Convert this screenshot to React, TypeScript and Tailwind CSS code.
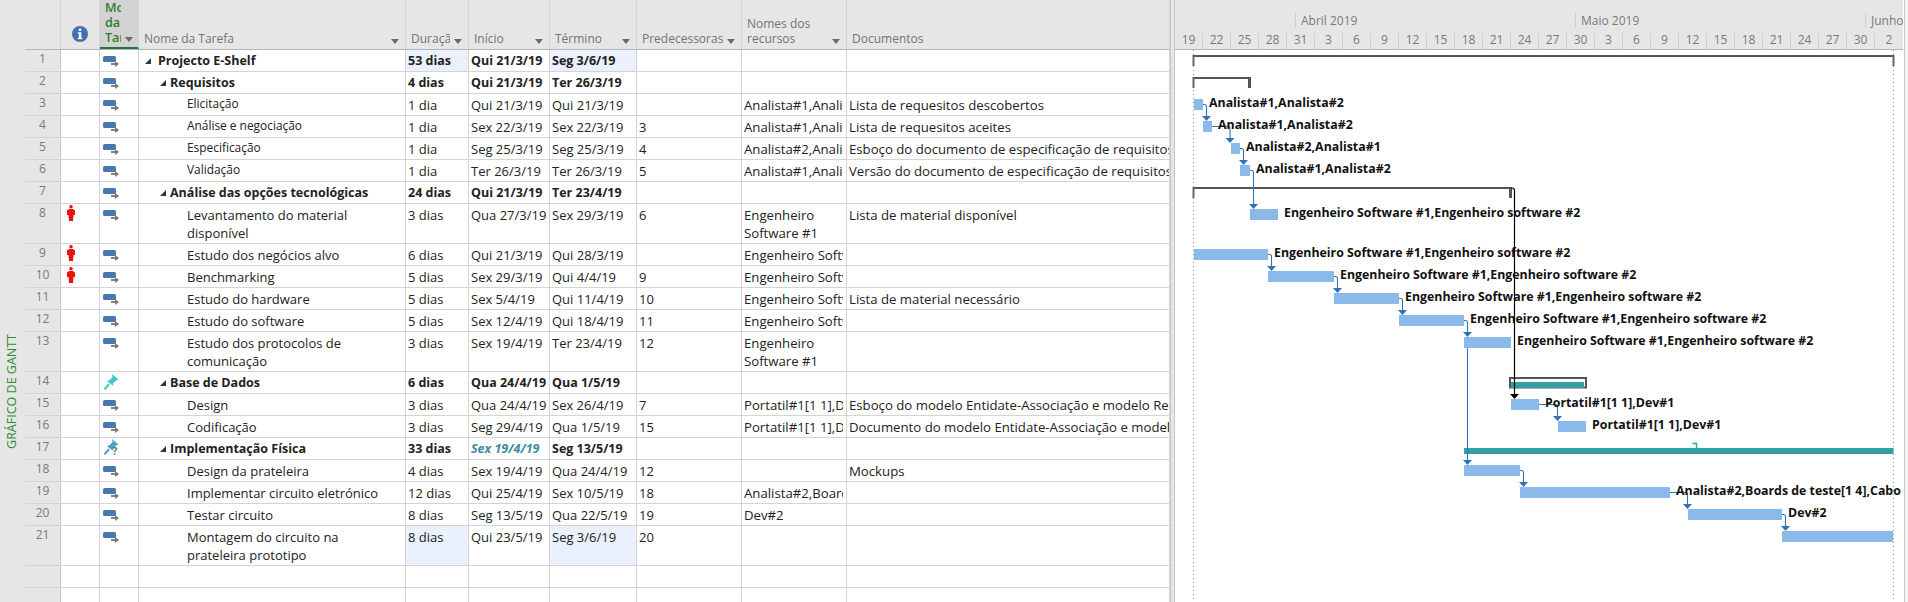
import type { ReactNode } from 'react'

type Row = {
  n?: number
  h?: number
  level?: 0 | 1 | 2
  name?: string
  lines?: string[]
  dur?: string
  start?: string
  end?: string
  pred?: string
  res?: string | string[]
  doc?: string
  small?: boolean
  person?: boolean
  mode?: 'auto' | 'pin' | 'pinq'
  hl?: boolean
}

const rows: Row[] = [
  { n: 1, level: 0, name: 'Projecto E-Shelf', dur: '53 dias', start: 'Qui 21/3/19', end: 'Seg 3/6/19', hl: true },
  { n: 2, level: 1, name: 'Requisitos', dur: '4 dias', start: 'Qui 21/3/19', end: 'Ter 26/3/19' },
  { n: 3, level: 2, small: true, name: 'Elicitação', dur: '1 dia', start: 'Qui 21/3/19', end: 'Qui 21/3/19', res: 'Analista#1,Analista#2', doc: 'Lista de requesitos descobertos' },
  { n: 4, level: 2, small: true, name: 'Análise e negociação', dur: '1 dia', start: 'Sex 22/3/19', end: 'Sex 22/3/19', pred: '3', res: 'Analista#1,Analista#2', doc: 'Lista de requesitos aceites' },
  { n: 5, level: 2, small: true, name: 'Especificação', dur: '1 dia', start: 'Seg 25/3/19', end: 'Seg 25/3/19', pred: '4', res: 'Analista#2,Analista#1', doc: 'Esboço do documento de especificação de requisitos' },
  { n: 6, level: 2, small: true, name: 'Validação', dur: '1 dia', start: 'Ter 26/3/19', end: 'Ter 26/3/19', pred: '5', res: 'Analista#1,Analista#2', doc: 'Versão do documento de especificação de requisitos' },
  { n: 7, level: 1, name: 'Análise das opções tecnológicas', dur: '24 dias', start: 'Qui 21/3/19', end: 'Ter 23/4/19' },
  { n: 8, h: 40, level: 2, person: true, lines: ['Levantamento do material', 'disponível'], dur: '3 dias', start: 'Qua 27/3/19', end: 'Sex 29/3/19', pred: '6', res: ['Engenheiro', 'Software #1'], doc: 'Lista de material disponível' },
  { n: 9, level: 2, person: true, name: 'Estudo dos negócios alvo', dur: '6 dias', start: 'Qui 21/3/19', end: 'Qui 28/3/19', res: 'Engenheiro Software #1' },
  { n: 10, level: 2, person: true, name: 'Benchmarking', dur: '5 dias', start: 'Sex 29/3/19', end: 'Qui 4/4/19', pred: '9', res: 'Engenheiro Software #1' },
  { n: 11, level: 2, name: 'Estudo do hardware', dur: '5 dias', start: 'Sex 5/4/19', end: 'Qui 11/4/19', pred: '10', res: 'Engenheiro Software #1', doc: 'Lista de material necessário' },
  { n: 12, level: 2, name: 'Estudo do software', dur: '5 dias', start: 'Sex 12/4/19', end: 'Qui 18/4/19', pred: '11', res: 'Engenheiro Software #1' },
  { n: 13, h: 40, level: 2, lines: ['Estudo dos protocolos de', 'comunicação'], dur: '3 dias', start: 'Sex 19/4/19', end: 'Ter 23/4/19', pred: '12', res: ['Engenheiro', 'Software #1'] },
  { n: 14, level: 1, mode: 'pin', name: 'Base de Dados', dur: '6 dias', start: 'Qua 24/4/19', end: 'Qua 1/5/19' },
  { n: 15, level: 2, name: 'Design', dur: '3 dias', start: 'Qua 24/4/19', end: 'Sex 26/4/19', pred: '7', res: 'Portatil#1[1 1],Dev#1', doc: 'Esboço do modelo Entidate-Associação e modelo Relacional' },
  { n: 16, level: 2, name: 'Codificação', dur: '3 dias', start: 'Seg 29/4/19', end: 'Qua 1/5/19', pred: '15', res: 'Portatil#1[1 1],Dev#1', doc: 'Documento do modelo Entidate-Associação e modelo Relacional' },
  { n: 17, level: 1, mode: 'pinq', name: 'Implementação Física', dur: '33 dias', start: 'Sex 19/4/19', end: 'Seg 13/5/19' },
  { n: 18, level: 2, name: 'Design da prateleira', dur: '4 dias', start: 'Sex 19/4/19', end: 'Qua 24/4/19', pred: '12', doc: 'Mockups' },
  { n: 19, level: 2, name: 'Implementar circuito eletrónico', dur: '12 dias', start: 'Qui 25/4/19', end: 'Sex 10/5/19', pred: '18', res: 'Analista#2,Boards de teste[1 4],Cabo' },
  { n: 20, level: 2, name: 'Testar circuito', dur: '8 dias', start: 'Seg 13/5/19', end: 'Qua 22/5/19', pred: '19', res: 'Dev#2' },
  { n: 21, h: 40, level: 2, lines: ['Montagem do circuito na', 'prateleira prototipo'], dur: '8 dias', start: 'Qui 23/5/19', end: 'Seg 3/6/19', pred: '20', hl: true },
  {},
  {},
]

const ORIGIN = 1175
const BODY_TOP = 50

const bars: Array<{ x: number; x2: number; y: number; label?: string; lx?: number; ly?: number }> = [
  { x: 1194, x2: 1203, y: 99, label: 'Analista#1,Analista#2', lx: 1209, ly: 103 },
  { x: 1203, x2: 1212, y: 121, label: 'Analista#1,Analista#2', lx: 1218, ly: 125 },
  { x: 1231, x2: 1240, y: 143, label: 'Analista#2,Analista#1', lx: 1246, ly: 147 },
  { x: 1240, x2: 1250, y: 165, label: 'Analista#1,Analista#2', lx: 1256, ly: 169 },
  { x: 1250, x2: 1278, y: 209, label: 'Engenheiro Software #1,Engenheiro software #2', lx: 1284, ly: 213 },
  { x: 1194, x2: 1268, y: 249, label: 'Engenheiro Software #1,Engenheiro software #2', lx: 1274, ly: 253 },
  { x: 1268, x2: 1334, y: 271, label: 'Engenheiro Software #1,Engenheiro software #2', lx: 1340, ly: 275 },
  { x: 1334, x2: 1399, y: 293, label: 'Engenheiro Software #1,Engenheiro software #2', lx: 1405, ly: 297 },
  { x: 1399, x2: 1464, y: 315, label: 'Engenheiro Software #1,Engenheiro software #2', lx: 1470, ly: 319 },
  { x: 1464, x2: 1511, y: 337, label: 'Engenheiro Software #1,Engenheiro software #2', lx: 1517, ly: 341 },
  { x: 1511, x2: 1539, y: 399, label: 'Portatil#1[1 1],Dev#1', lx: 1545, ly: 403 },
  { x: 1558, x2: 1586, y: 421, label: 'Portatil#1[1 1],Dev#1', lx: 1592, ly: 425 },
  { x: 1464, x2: 1520, y: 465 },
  { x: 1520, x2: 1670, y: 487, label: 'Analista#2,Boards de teste[1 4],Cabo', lx: 1676, ly: 491 },
  { x: 1688, x2: 1782, y: 509, label: 'Dev#2', lx: 1788, ly: 513 },
  { x: 1782, x2: 1893, y: 531 },
]

const links = [
  { x: 1203, y: 104.5, to: 1206.5, end: 116 },
  { x: 1212, y: 126.5, to: 1230, end: 138 },
  { x: 1240, y: 148.5, to: 1243.5, end: 160 },
  { x: 1250, y: 170.5, to: 1253.5, end: 204 },
  { x: 1268, y: 254.5, to: 1271.5, end: 266 },
  { x: 1334, y: 276.5, to: 1337.5, end: 288 },
  { x: 1399, y: 298.5, to: 1402.5, end: 310 },
  { x: 1464, y: 320.5, to: 1467.5, end: 332 },
  { x: 1467.5, y: 337, to: 1467.5, end: 460 },
  { x: 1539, y: 404.5, to: 1557.5, end: 416 },
  { x: 1520, y: 470.5, to: 1523.5, end: 482 },
  { x: 1670, y: 492.5, to: 1687.5, end: 504 },
  { x: 1782, y: 514.5, to: 1785.5, end: 526 },
]

const days = ['19', '22', '25', '28', '31', '3', '6', '9', '12', '15', '18', '21', '24', '27', '30', '3', '6', '9', '12', '15', '18', '21', '24', '27', '30', '2']

function TaskIcon() {
  return (
    <svg width="16" height="11" viewBox="0 0 16 11">
      <rect x="0" y="0" width="13" height="6" rx="1.5" fill="#4a78ae" />
      <path d="M8 8h5" stroke="#777" strokeWidth="1.8" />
      <path d="M12 5 16 8l-4 3z" fill="#777" />
    </svg>
  )
}

function PinIcon({ question }: { question?: boolean }) {
  const color = question ? '#45a7c6' : '#45c8c4'
  return (
    <svg width="16" height="16" viewBox="0 0 16 16">
      <path d="M9 0l6.500 5.500-2 .7-3.500 3.300.3 2.500-6.500-5 2.600-.8L9.500 3z" fill={color} />
      <path d="M6 10 1.500 15.500" stroke={color} strokeWidth="2" />
      {question && <text x="9.500" y="15.800" fontSize="10" fontWeight="700" fill="#5a6f7d" fontFamily="'Open Sans', sans-serif">?</text>}
    </svg>
  )
}

function PersonIcon() {
  return (
    <svg width="8" height="16" viewBox="0 0 8 16" fill="#ee1111">
      <circle cx="4" cy="1.8" r="1.8" />
      <path d="M2 4h4l2 1.500V10H6.500L6 16H2l-.5-6H0V5.500z" />
    </svg>
  )
}

function Collapse() {
  return (
    <svg width="6" height="6" viewBox="0 0 6 6" className="shrink-0">
      <path d="M6 0v6H0z" fill="#333" />
    </svg>
  )
}

function Caret() {
  return (
    <svg width="8" height="5" viewBox="0 0 8 5" className="shrink-0">
      <path d="M0 0h8L4 5z" fill="#6a6a6a" />
    </svg>
  )
}

function HeaderCell({ className, children, caret = true }: { className: string; children: ReactNode; caret?: boolean }) {
  return (
    <div className={`flex h-full shrink-0 items-end border-r border-[#d4d4d4] pb-[3px] ${className}`}>
      <div className="min-w-0 flex-1 overflow-hidden whitespace-nowrap leading-[15px]">{children}</div>
      {caret && <div className="mb-[2px] ml-1 mr-[6px]"><Caret /></div>}
    </div>
  )
}

function Header() {
  return (
    <div className="flex h-[50px] border-b border-[#b4b4b4] bg-[#e6e6e6] text-[12px] text-[#70757a]">
      <div className="h-full w-[36px] shrink-0 border-r border-[#d4d4d4]" />
      <div className="flex h-full w-[39px] shrink-0 items-end justify-center border-r border-[#d4d4d4] pb-[7px]">
        <svg width="16" height="16" viewBox="0 0 16 16">
          <circle cx="8" cy="8" r="8" fill="#3f72ae" />
          <rect x="6.700" y="2.600" width="2.600" height="2.400" fill="#fff" />
          <path d="M5.800 6.200h3.500v5.600h1v1.400H5.800v-1.400h1V7.600h-1z" fill="#fff" />
        </svg>
      </div>
      <div className="flex h-full w-[39px] shrink-0 border-b-2 border-r border-[#d4d4d4] border-b-[#217346] bg-[#d2d2d2] pl-[5px] text-[12.5px] font-semibold leading-[15px] text-[#2f7d32]">
        <div className="w-[16px] overflow-hidden whitespace-nowrap">
          <div className="h-[15px]">Modo</div>
          <div className="h-[15px]">da</div>
          <div className="h-[15px]">Tarefa</div>
        </div>
        <div className="ml-[4px] mt-[37px]"><Caret /></div>
      </div>
      <HeaderCell className="w-[267px] pl-[5px]">Nome da Tarefa</HeaderCell>
      <HeaderCell className="w-[63px] pl-[5px]">Duração</HeaderCell>
      <HeaderCell className="w-[81px] pl-[5px]">Início</HeaderCell>
      <HeaderCell className="w-[87px] pl-[5px]">Término</HeaderCell>
      <HeaderCell className="w-[105px] pl-[5px]">Predecessoras</HeaderCell>
      <HeaderCell className="w-[105px] pl-[5px]">
        <div>Nomes dos</div>
        <div>recursos</div>
      </HeaderCell>
      <HeaderCell className="w-[323px] pl-[5px]" caret={false}>Documentos</HeaderCell>
    </div>
  )
}

function GridRow({ row }: { row: Row }) {
  const bold = row.level !== undefined && row.level < 2
  const tall = row.h === 40
  const cell = 'shrink-0 overflow-hidden whitespace-nowrap border-r border-[#d4d4d4] pl-[2px] pr-[3px] pt-[2px]'
  const hlBg = row.hl ? 'bg-[#eaf0fc]' : ''
  return (
    <div className={`flex border-b border-[#d4d4d4] leading-[18px] text-[#222] ${tall ? 'h-[40px]' : 'h-[22px]'} ${bold ? 'text-[12.5px] font-bold text-[#111]' : 'text-[13px]'}`}>
      <div className="w-[36px] shrink-0 border-r border-[#c8c8c8] bg-[#e6e6e6] text-center text-[12px] font-normal text-[#7a7a7a]">{row.n}</div>
      <div className="w-[39px] shrink-0 border-r border-[#d4d4d4] pl-[6px] pt-px">{row.person && <PersonIcon />}</div>
      <div className="w-[39px] shrink-0 border-r border-[#d4d4d4] pl-[3px]">
        {row.n && !row.mode && <div className="pt-[6px]"><TaskIcon /></div>}
        {row.mode === 'pin' && <div className="pt-[2px]"><PinIcon /></div>}
        {row.mode === 'pinq' && <div className="pt-px"><PinIcon question /></div>}
      </div>
      <div className="flex w-[267px] shrink-0 items-start overflow-hidden border-r border-[#d4d4d4] pt-[2px]">
        {row.level === 0 && <div className="ml-[6px] mr-[7px] mt-[6px]"><Collapse /></div>}
        {row.level === 1 && <div className="ml-[21px] mr-[4px] mt-[6px]"><Collapse /></div>}
        {row.level === 2 && <div className="w-[48px] shrink-0" />}
        <div className={row.small ? 'mt-[-2px] text-[11.9px]' : ''}>
          {row.name}
          {row.lines?.map((l) => <div key={l}>{l}</div>)}
        </div>
      </div>
      <div className={`w-[63px] ${cell} ${hlBg}`}>{row.dur}</div>
      <div className={`w-[81px] ${cell} ${row.n === 17 ? 'italic text-[#3a8ca0]' : ''}`}>{row.start}</div>
      <div className={`w-[87px] ${cell} ${hlBg}`}>{row.end}</div>
      <div className={`w-[105px] ${cell}`}>{row.pred}</div>
      <div className={`w-[105px] text-[13.2px] ${cell}`}>
        {Array.isArray(row.res) ? row.res.map((r) => <div key={r}>{r}</div>) : <div className="overflow-hidden">{row.res}</div>}
      </div>
      <div className={`w-[323px] text-[13.2px] ${cell} pr-0`}>{row.doc}</div>
    </div>
  )
}

function Links() {
  const w = 728
  const h = 552
  const ox = ORIGIN
  const oy = BODY_TOP
  return (
    <svg width={w} height={h} viewBox={`${ox} ${oy} ${w} ${h}`} className="absolute left-0 top-0" fill="none">
      <path d="M1193.500 50V602M1893.500 50V602" stroke="#8a8a8a" strokeDasharray="1 3" />
      <path d="M1193 56H1893M1193 78H1250M1193 188H1512" stroke="#555" strokeWidth="2" />
      <path d="M1193.500 55V66M1893.500 55V66M1193.500 77V88M1193.500 187V198" stroke="#666" strokeWidth="2" />
      <path d="M1249.500 77V88M1510.500 187V198" stroke="#555" strokeWidth="3" />
      <rect x="1510" y="378" width="76" height="9.500" stroke="#555" strokeWidth="2" />
      <rect x="1511" y="382" width="73" height="6" fill="#33a0a8" />
      <rect x="1464" y="448" width="429.500" height="6" fill="#33a0a8" />
      <path d="M1692.500 443.500H1696.500V448" stroke="#33a0a8" strokeWidth="1.400" />
      {links.map((l) => {
        const d = l.x === l.to
          ? `M${l.to} ${l.y}V${l.end}`
          : `M${l.x} ${l.y}H${l.to - 2}Q${l.to} ${l.y} ${l.to} ${l.y + 2}V${l.end}`
        return (
          <g key={`${l.x}-${l.y}`}>
            <path d={d} stroke="#2f75b5" strokeWidth="1.100" />
            <path d={`M${l.to - 4.5} ${l.end}H${l.to + 4.5}L${l.to} ${l.end + 5}z`} fill="#2f75b5" />
          </g>
        )
      })}
      <path d="M1511 188H1512Q1514.500 188 1514.500 190.500V394" stroke="#000" strokeWidth="1.200" />
      <path d="M1510 394H1519L1514.500 399z" fill="#000" />
    </svg>
  )
}

function Chart() {
  return (
    <div className="flex w-[728px] shrink-0 flex-col">
      <div className="h-[50px] border-b border-[#b4b4b4] bg-[#e6e6e6] text-[12px] text-[#7a7a7a]">
        <div className="flex h-[33px] overflow-hidden pt-[13px] leading-[16px]">
          <div className="w-[120px] shrink-0" />
          <div className="h-[15px] w-[280px] shrink-0 border-l border-[#d0d0d0] pl-[5px]">Abril 2019</div>
          <div className="h-[15px] w-[290px] shrink-0 border-l border-[#d0d0d0] pl-[5px]">Maio 2019</div>
          <div className="h-[15px] w-[38px] shrink-0 overflow-hidden whitespace-nowrap border-l border-[#d0d0d0] pl-[5px]">Junho 2019</div>
        </div>
        <div className="flex h-[16px] leading-[14px]">
          {days.map((d, i) => (
            <div key={`${d}-${i}`} className="w-[28px] shrink-0 border-r border-[#d0d0d0] text-center last:border-r-0">{d}</div>
          ))}
        </div>
      </div>
      <div className="relative h-[552px] overflow-hidden bg-white">
        <Links />
        {bars.map((b) => (
          <div key={b.y} className="absolute h-[11px] bg-[#8bb9ea]" style={{ left: b.x - ORIGIN, top: b.y - BODY_TOP, width: b.x2 - b.x }} />
        ))}
        {bars.filter((b) => b.label).map((b) => (
          <div
            key={`l${b.y}`}
            className="absolute whitespace-nowrap text-[12.35px] font-bold leading-[18px] text-[#111]"
            style={{ left: (b.lx ?? 0) - ORIGIN, top: (b.ly ?? 0) - BODY_TOP - 9 }}
          >
            {b.label}
          </div>
        ))}
      </div>
    </div>
  )
}

export default function App() {
  return (
    <div className="flex h-[602px] w-[1908px] overflow-hidden bg-white font-['Open_Sans',sans-serif]">
      <div className="flex w-[25px] shrink-0 items-end justify-center bg-[#e6e6e6] pb-[153px]">
        <div className="rotate-180 whitespace-nowrap text-[12.5px] text-[#2e8b35] [writing-mode:vertical-rl]">GRÁFICO DE GANTT</div>
      </div>
      <div className="w-[1145px] shrink-0 overflow-hidden">
        <Header />
        {rows.map((r, i) => <GridRow key={i} row={r} />)}
      </div>
      <div className="w-[5px] shrink-0 border-x border-[#c8c8c8] bg-[#e6e6e6]" />
      <Chart />
      <div className="ml-px flex-1 border-l border-[#c8c8c8] bg-[#f4f4f4]" />
    </div>
  )
}
